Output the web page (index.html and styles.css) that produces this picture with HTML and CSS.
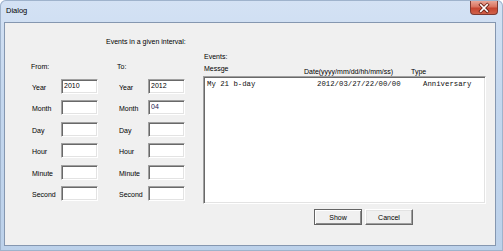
FILE: index.html
```html
<!DOCTYPE html>
<html lang="en">
<head>
    <meta charset="UTF-8">
    <meta name="viewport" content="width=device-width, initial-scale=1.0">
    <title>Dialog</title>
    <link rel="stylesheet" href="styles.css">
</head>
<body>
    <div class="window">
        <div class="titlebar">
            <span class="title">Dialog</span>
            <button class="close" aria-label="Close">
                <svg width="28" height="14" viewBox="0 0 28 14">
                    <path d="M10.5 3.5 L17.5 10.5 M17.5 3.5 L10.5 10.5" stroke="#6e2418" stroke-width="3.6" stroke-linecap="square"/>
                    <path d="M10.5 3.5 L17.5 10.5 M17.5 3.5 L10.5 10.5" stroke="#ffffff" stroke-width="1.8" stroke-linecap="square"/>
                </svg>
            </button>
        </div>

        <div class="client">
            <div class="interval">
                <div class="interval-title">Events in a given interval:</div>
                <div class="ranges">
                    <div class="range range-from">
                        <div class="range-head">From:</div>
                        <div class="rows">
                            <div class="row"><label>Year</label><input class="field" type="text" value="2010"></div>
                            <div class="row"><label>Month</label><input class="field" type="text" value=""></div>
                            <div class="row"><label>Day</label><input class="field" type="text" value=""></div>
                            <div class="row"><label>Hour</label><input class="field" type="text" value=""></div>
                            <div class="row"><label>Minute</label><input class="field" type="text" value=""></div>
                            <div class="row"><label>Second</label><input class="field" type="text" value=""></div>
                        </div>
                    </div>
                    <div class="range range-to">
                        <div class="range-head">To:</div>
                        <div class="rows">
                            <div class="row"><label>Year</label><input class="field" type="text" value="2012"></div>
                            <div class="row"><label>Month</label><input class="field field-top" type="text" value="04"></div>
                            <div class="row"><label>Day</label><input class="field" type="text" value=""></div>
                            <div class="row"><label>Hour</label><input class="field" type="text" value=""></div>
                            <div class="row"><label>Minute</label><input class="field" type="text" value=""></div>
                            <div class="row"><label>Second</label><input class="field" type="text" value=""></div>
                        </div>
                    </div>
                </div>
            </div>

            <div class="events">
                <div class="events-title">Events:</div>
                <div class="events-head">
                    <span class="head-msg">Messge</span>
                    <span class="head-date">Date(yyyy/mm/dd/hh/mm/ss)</span>
                    <span class="head-type">Type</span>
                </div>
                <div class="listbox">
                    <div class="item">
                        <span class="item-msg">My 21 b-day</span>
                        <span class="item-date">2012/03/27/22/00/00</span>
                        <span class="item-type">Anniversary</span>
                    </div>
                </div>
                <div class="actions">
                    <button class="btn btn-default">Show</button>
                    <button class="btn">Cancel</button>
                </div>
            </div>
        </div>
    </div>
</body>
</html>
```

FILE: styles.css
```css
body {
    margin: 0;
    font-family: "Liberation Sans", Arial, sans-serif;
    font-size: 7px;
    color: #000;
}
.window {
    width: 503px;
    height: 251px;
    box-sizing: border-box;
    display: flex;
    flex-direction: column;
    background: linear-gradient(180deg, #d4e2f4 0%, #c4d7ee 40%, #bcd1ea 100%);
    border-radius: 6px 6px 0 0;
    box-shadow: inset 0 0 0 1px #9fb3cc;
}
.titlebar {
    height: 22px;
    display: flex;
    justify-content: space-between;
    align-items: flex-start;
    padding: 0 5px 0 6px;
}
.title {
    font-size: 7.5px;
    line-height: 10px;
    margin-top: 6px;
}
.close {
    width: 28px;
    height: 14px;
    margin-top: 1px;
    padding: 0;
    border: 1px solid #7d3a32;
    border-top: none;
    border-radius: 0 0 4px 4px;
    background: linear-gradient(180deg, #e9a697 0%, #d9735f 45%, #c6442f 55%, #d0624a 100%);
    box-sizing: border-box;
    display: flex;
    align-items: center;
    justify-content: center;
}
.close svg {
    display: block;
}
.client {
    height: 224px;
    margin: 0 7px 0 4px;
    box-sizing: border-box;
    border: 1px solid #8597b0;
    background: #f0f0f0;
    display: flex;
}
.interval {
    margin-left: 26px;
    width: 172px;
}
.interval-title {
    margin-top: 14px;
    padding-left: 75px;
    line-height: 10px;
}
.ranges {
    margin-top: 15px;
    display: flex;
}
.range {
    width: 88px;
}
.range-head {
    line-height: 10px;
}
.rows {
    margin-top: 7px;
    display: flex;
    flex-direction: column;
    gap: 6.4px;
}
.row {
    display: flex;
    align-items: center;
    height: 15px;
    padding-left: 1px;
}
.range-to .row {
    padding-left: 2px;
}
.row label {
    width: 29px;
    padding-top: 3px;
    line-height: 10px;
}
.field {
    width: 37px;
    height: 15px;
    box-sizing: border-box;
    margin: 0;
    padding: 0 2px 2px 2px;
    border: 1px solid;
    border-color: #a0a0a0 #ffffff #ffffff #a0a0a0;
    box-shadow: inset 1px 1px 0 #696969, inset -1px -1px 0 #e3e3e3;
    background: #fff;
    font-family: "Liberation Sans", Arial, sans-serif;
    font-size: 7px;
    color: #000;
    outline: none;
}
.field-top {
    color: #1c2050;
}
.events {
    width: 283px;
    padding-top: 29px;
}
.events-title {
    line-height: 10px;
    padding-left: 1px;
}
.events-head {
    margin-top: 2px;
    height: 12px;
    display: flex;
    align-items: flex-start;
    line-height: 10px;
    padding-left: 1px;
}
.head-msg {
    width: 100px;
}
.head-date {
    width: 107px;
    padding-top: 3px;
}
.head-type {
    padding-top: 3px;
}
.listbox {
    height: 128px;
    box-sizing: border-box;
    border: 1px solid;
    border-color: #a0a0a0 #ffffff #ffffff #a0a0a0;
    box-shadow: inset 1px 1px 0 #696969, inset -1px -1px 0 #e3e3e3;
    background: #fff;
    padding: 2px 2px 2px 3px;
}
.item {
    display: flex;
    font-family: "Liberation Mono", "Courier New", monospace;
    font-size: 7.33px;
    line-height: 10px;
    white-space: pre;
    color: #101010;
}
.item-msg {
    width: 110px;
}
.item-date {
    width: 106px;
}
.actions {
    margin-top: 5px;
    padding-left: 111px;
    display: flex;
    gap: 3px;
}
.btn {
    width: 48px;
    height: 16px;
    box-sizing: border-box;
    margin: 0;
    padding: 0;
    border: 1px solid;
    border-color: #ffffff #696969 #696969 #ffffff;
    box-shadow: inset -1px -1px 0 #a0a0a0, inset 1px 1px 0 #e3e3e3;
    background: #f0f0f0;
    font-family: "Liberation Sans", Arial, sans-serif;
    font-size: 7px;
    color: #000;
}
.btn-default {
    border-color: #646464;
    box-shadow: inset 1px 1px 0 #ffffff, inset -1px -1px 0 #8a8a8a;
}
```
